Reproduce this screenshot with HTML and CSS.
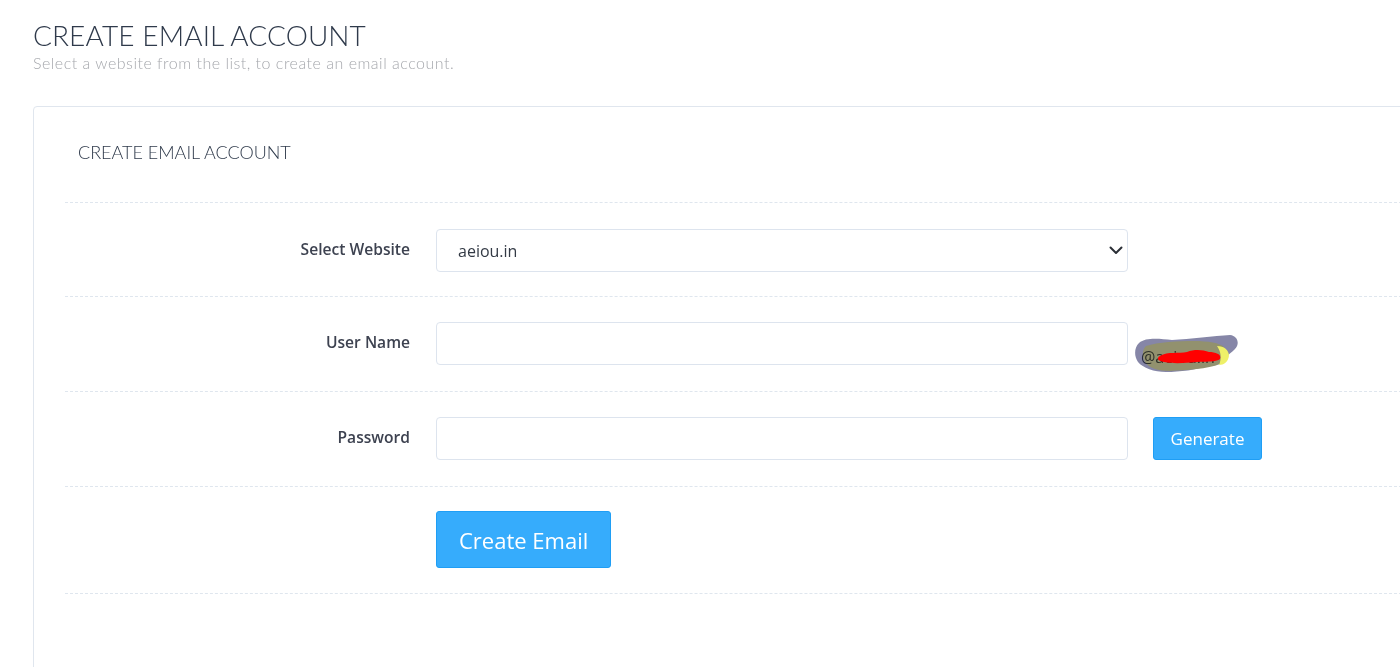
FILE: index.html
```html
<!DOCTYPE html>
<html lang="en">
<head>
<meta charset="utf-8">
<title>Create Email Account</title>
<link rel="stylesheet" href="styles.css">
</head>
<body>
<div class="page">
  <header class="page-head">
    <h1 class="page-title">CREATE EMAIL ACCOUNT</h1>
    <p class="page-sub">Select a website from the list, to create an email account.</p>
  </header>
  <section class="card">
    <h2 class="card-title">CREATE EMAIL ACCOUNT</h2>
    <form class="form">
      <div class="row row-first">
        <label class="label" for="site">Select Website</label>
        <div class="select-wrap">
          <select id="site" class="control select">
            <option>aeiou.in</option>
          </select>
          <svg class="chevron" width="14" height="9" viewBox="0 0 14 9" aria-hidden="true">
            <path d="M1.5 1.5 7 7 12.5 1.5" fill="none" stroke="#2b2f36" stroke-width="2" stroke-linecap="round" stroke-linejoin="round"/>
          </svg>
        </div>
        <div></div>
      </div>
      <div class="row">
        <label class="label" for="user">User Name</label>
        <input id="user" class="control" type="text">
        <div class="extra">
          <span class="domain">@aeiou.in
            <svg class="redact" width="106" height="40" viewBox="0 0 106 40" aria-hidden="true">
              <g class="hl">
                <path d="M5 9 C12 3 26 5 38 6 C56 5 80 2 96 1 C104 2 106 10 101 15 C95 21 88 26 76 31 C62 36 46 38 32 38 C20 38 9 34 4 28 C0 22 0 14 5 9 Z" fill="#7f80a2"/>
                <path d="M12 12 C24 8 44 7 60 7 C74 7 86 9 90 13 C94 19 92 27 86 30 C74 35 52 36 36 37 C24 37 15 34 11 28 C8 22 8 16 12 12 Z" fill="#8c8b66"/>
                <path d="M83 12 C90 12 95 16 95 22 C94 28 90 31 85 31 C88 24 87 18 83 12 Z" fill="#eef060"/>
              </g>
              <path d="M26 22 C34 17 45 20 53 18 C61 15 69 16 75 18 C81 18 88 20 86 25 C80 29 70 27 62 28 C52 29 40 30 30 28 C24 27 22 24 26 22 Z" fill="#ff0000"/>
            </svg>
          </span>
        </div>
      </div>
      <div class="row">
        <label class="label" for="pass">Password</label>
        <input id="pass" class="control" type="password">
        <div class="gen-cell"><button type="button" class="btn btn-gen">Generate</button></div>
      </div>
      <div class="row row-submit">
        <div></div>
        <div><button type="button" class="btn btn-lg">Create Email</button></div>
        <div></div>
      </div>
    </form>
  </section>
</div>
</body>
</html>
```

FILE: styles.css
```css
html, body {
  margin: 0;
  padding: 0;
  overflow: hidden;
  background: #ffffff;
}

body {
  font-family: "Open Sans", "Noto Sans", sans-serif;
  color: #3d4250;
}

.page {
  padding: 17px 0 0 33px;
}

.page-title {
  margin: 0;
  font-family: "Lato", "Open Sans", sans-serif;
  font-weight: 300;
  font-size: 28px;
  line-height: 36px;
  letter-spacing: 0.1px;
  color: #2f3a4b;
}

.page-sub {
  margin: 0;
  font-family: "Lato", "Open Sans", sans-serif;
  font-weight: 300;
  font-size: 16px;
  line-height: 20px;
  color: #a6a8ad;
  letter-spacing: 0.5px;
}

.card {
  margin-top: 33px;
  width: 1420px;
  border: 1px solid #e0e6ee;
  border-radius: 4px;
  padding: 0 0 80px 31px;
  box-sizing: border-box;
}

.card-title {
  margin: 0;
  padding: 34px 13px 39px;
  font-family: "Lato", "Open Sans", sans-serif;
  font-weight: 300;
  font-size: 18px;
  line-height: 22px;
  color: #2f3a4b;
}

.form {
  display: flex;
  flex-direction: column;
}

.row {
  display: grid;
  grid-template-columns: 345px 692px 1fr;
  column-gap: 26px;
  align-items: center;
  border-top: 1px dashed #dfe6ee;
  padding: 25px 0 26px;
}

.row-first {
  padding: 26px 0 24px;
}

.row-submit {
  padding: 24px 0 25px;
  border-bottom: 1px dashed #dfe6ee;
}

.label {
  text-align: right;
  font-weight: 600;
  font-size: 15.6px;
  color: #3d4250;
  margin-top: -4px;
}

.control {
  box-sizing: border-box;
  width: 692px;
  height: 43px;
  border: 1px solid #dde4ee;
  border-radius: 4px;
  background: #ffffff;
  font-family: "Open Sans", "Noto Sans", sans-serif;
  font-size: 16px;
  color: #333a45;
  padding: 0 12px;
}

.select-wrap {
  position: relative;
  width: 692px;
  height: 43px;
}

.select {
  appearance: none;
  -webkit-appearance: none;
  padding-left: 21px;
  display: block;
}

.chevron {
  position: absolute;
  right: 5px;
  top: 17px;
  pointer-events: none;
}

.extra {
  align-self: stretch;
  height: 43px;
  box-sizing: border-box;
  padding-top: 24px;
}

.domain {
  position: relative;
  display: inline-block;
  margin-left: -13px;
  font-size: 16px;
  line-height: 22px;
  color: #4e535c;
}

.redact {
  position: absolute;
  left: -7px;
  top: -12px;
}

.hl {
  mix-blend-mode: multiply;
  opacity: 0.95;
}

.gen-cell {
  margin-left: -1px;
}

.btn {
  box-sizing: border-box;
  height: 43px;
  padding: 0 15px;
  background: #36acfc;
  border: 1px solid #1f9ef5;
  border-radius: 3px;
  color: #ffffff;
  font-family: "Open Sans", "Noto Sans", sans-serif;
  font-size: 17px;
  cursor: pointer;
}

.btn-gen {
  width: 109px;
  padding: 0;
}

.btn-lg {
  height: 57px;
  padding: 0 22px;
  font-size: 22px;
}
```
